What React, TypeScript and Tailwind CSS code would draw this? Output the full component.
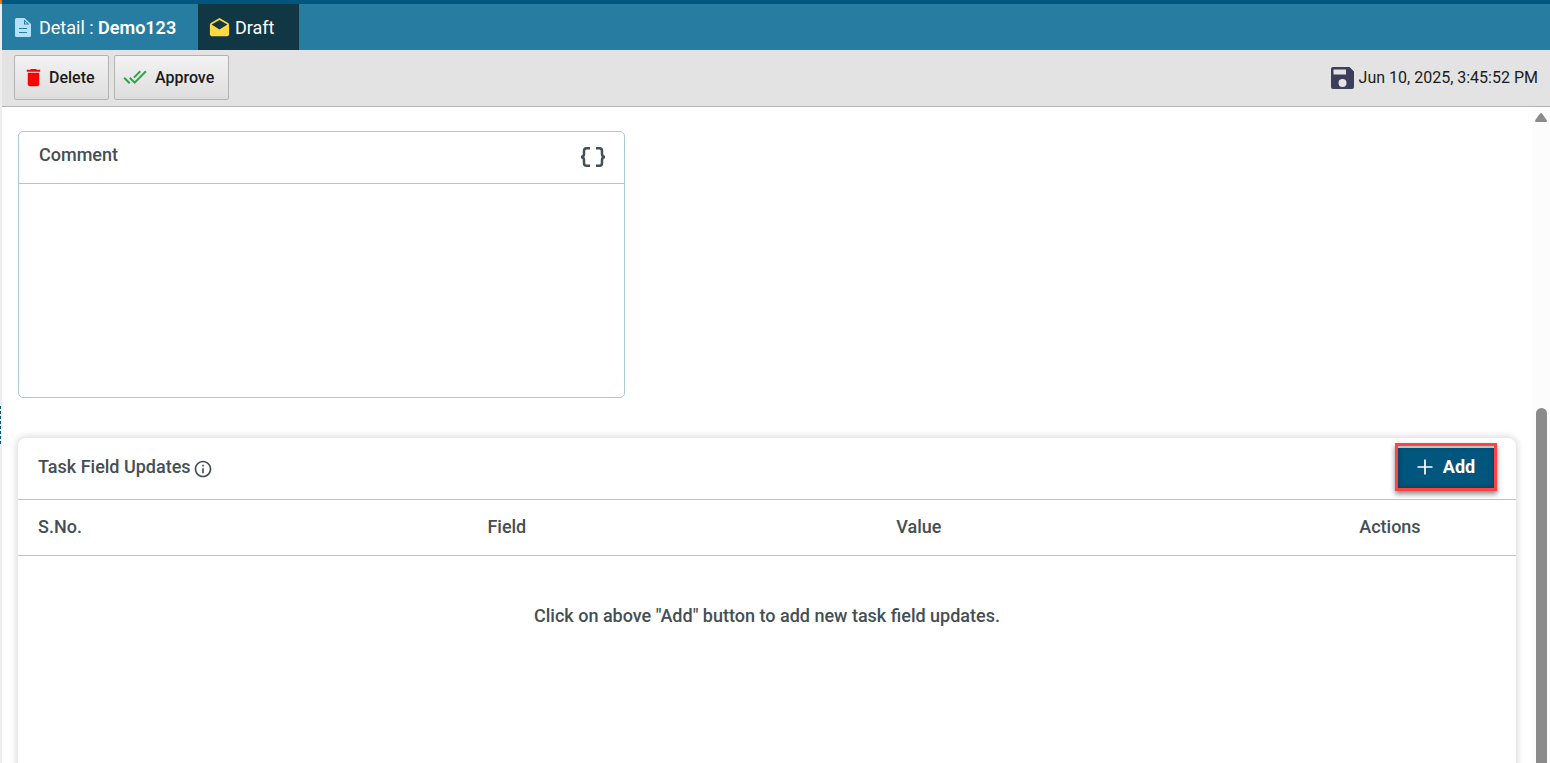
import { useState } from 'react';
import { MdDelete, MdDoneAll, MdDrafts, MdInfoOutline } from 'react-icons/md';

const DocumentIcon = () => (
  <svg className="h-[19px] w-4" viewBox="0 0 16 19" aria-hidden="true">
    <path fill="#b3e1ff" d="M1.500 0h8L16 6v11.500a1.500 1.500 0 0 1-1.500 1.500h-13A1.500 1.500 0 0 1 0 17.500v-16A1.500 1.500 0 0 1 1.500 0z" />
    <path fill="#277da1" d="M9 1.500V6.500h5.500zM4 10h8v1H4zM4 14h8v1H4z" />
    <path fill="#b3e1ff" d="M10 3.500v2h2.300z" />
  </svg>
);

const SaveIcon = () => (
  <svg className="h-[22px] w-[23px]" viewBox="0 0 23 22" aria-hidden="true">
    <path
      fill="#3d3d5c"
      fillRule="evenodd"
      d="M2 0h16.500L23 4.500V20a2 2 0 0 1-2 2H2a2 2 0 0 1-2-2V2a2 2 0 0 1 2-2zM2.500 2.500v5H15v-5zM11.500 12a4 4 0 1 0 0 8 4 4 0 0 0 0-8z"
    />
  </svg>
);

const BracesIcon = () => (
  <svg className="h-5 w-[26px]" viewBox="0 0 26 20" fill="none" stroke="#444f55" strokeWidth="2.500" aria-hidden="true">
    <path d="M10 1.250H6.500Q4 1.250 4 4v3Q4 10 1 10q3 0 3 3v3q0 2.750 2.500 2.750H10" />
    <path d="M16 1.250h3.500Q22 1.250 22 4v3q0 3 3 3-3 0-3 3v3q0 2.750-2.500 2.750H16" />
  </svg>
);

const PlusIcon = () => (
  <svg className="size-4" viewBox="0 0 16 16" stroke="currentColor" strokeWidth="1.700" aria-hidden="true">
    <path d="M8 .5v15M.5 8h15" />
  </svg>
);

const toolButton =
  'flex h-[45px] items-center border border-[#b3b3b3] rounded-xs bg-linear-to-b from-[#f3f3f3] to-[#dedddd] font-medium text-[#1a1a1a]';

const columns = [
  { title: 'S.No.', width: 'w-[30%]' },
  { title: 'Field', width: 'w-[27.3%]' },
  { title: 'Value', width: 'w-[30.9%]' },
  { title: 'Actions', width: '' },
];

const Header = () => (
  <header className="flex h-[50px] shrink-0 border-t-4 border-[#00567d] bg-[#277da1] text-lg text-white">
    <div className="flex w-[196px] items-center gap-2 pl-[13px]">
      <DocumentIcon />
      <span className="pt-0.5 whitespace-nowrap">
        Detail : <b className="font-semibold">Demo123</b>
      </span>
    </div>
    <div className="flex w-[101px] items-center gap-1 bg-[#123744] pt-0.5 pl-2.5">
      <MdDrafts className="size-[23px] text-[#ffd740]" />
      <span>Draft</span>
    </div>
  </header>
);

const Toolbar = () => (
  <div className="flex h-[57px] shrink-0 items-center justify-between border-b border-[#b3b3b3] bg-[#e3e3e3] px-3">
    <div className="flex gap-[5px] pb-0.5">
      <button type="button" className={`${toolButton} w-[95px] gap-1 pl-[7px]`}>
        <MdDelete className="size-[23px] text-[#ff0000]" />
        <span className="pt-0.5">Delete</span>
      </button>
      <button type="button" className={`${toolButton} w-[115px] gap-2 pl-2`}>
        <MdDoneAll className="size-6 text-[#28a745]" />
        <span className="pt-0.5">Approve</span>
      </button>
    </div>
    <div className="flex items-center gap-[5px] text-[#1a1a1a]">
      <SaveIcon />
      <time dateTime="2025-06-10T15:45:52">Jun 10, 2025, 3:45:52 PM</time>
    </div>
  </div>
);

const CommentBox = () => {
  const [comment, setComment] = useState('');

  return (
    <section className="flex h-[267px] w-[40.5%] flex-col rounded-[5px] border border-[#a9c9d6]">
      <div className="flex h-[52px] items-center justify-between border-b border-[#a9c9d6] pr-[18px] pb-0.5 pl-5">
        <label htmlFor="comment" className="pb-1">Comment</label>
        <button type="button" aria-label="Insert field">
          <BracesIcon />
        </button>
      </div>
      <textarea
        id="comment"
        className="w-full flex-1 resize-none px-5 py-3 outline-none"
        value={comment}
        onChange={(e) => setComment(e.target.value)}
      />
    </section>
  );
};

const TaskFieldUpdates = () => (
  <section className="mt-10 min-h-[400px] rounded-lg bg-white shadow-[0_0_6px_2px_#00000022]">
    <div className="flex h-[62px] items-center justify-between border-b border-[#a9c9d6] pr-[19px] pb-[3px] pl-5">
      <div className="flex items-center gap-0.5">
        <h2>Task Field Updates</h2>
        <MdInfoOutline className="mt-1 size-5" />
      </div>
      <button
        type="button"
        className="flex h-12 w-[102px] items-center justify-center gap-2.5 border-3 border-[#ff4343] bg-[#00567d] font-bold text-white shadow-[0_3px_5px_#00000077,inset_0_2px_0_#b9c4c4,inset_0_0_4px_1px_#00425f]"
      >
        <PlusIcon />
        Add
      </button>
    </div>
    <table className="w-full table-fixed text-left">
      <thead>
        <tr className="h-[55px] border-b border-[#a9c9d6]">
          {columns.map((column) => (
            <th key={column.title} scope="col" className={`${column.width} pl-5 font-medium`}>
              {column.title}
            </th>
          ))}
        </tr>
      </thead>
      <tbody>
        <tr>
          <td colSpan={4} className="pt-[46px] text-center">
            Click on above "Add" button to add new task field updates.
          </td>
        </tr>
      </tbody>
    </table>
  </section>
);

const App = () => (
  <div className="flex h-screen overflow-hidden bg-white font-[Roboto,sans-serif]">
    {/* Splitter */}
    <div className="flex w-0.5 shrink-0 flex-col bg-[#ededed]">
      <div className="h-1 bg-[#f97316]" />
      <div className="flex flex-1 flex-col justify-center pt-[83px]">
        <div className="h-[38px] w-px bg-[repeating-linear-gradient(#00567d_0_3px,#ededed_3px_5px)]" />
      </div>
    </div>

    <div className="flex min-w-0 flex-1 flex-col">
      <Header />
      <Toolbar />
      <div className="flex min-h-0 flex-1">
        <main className="min-w-0 flex-1 overflow-hidden pt-6 pr-4 pl-4 text-lg font-medium text-[#444f55]">
          <CommentBox />
          <TaskFieldUpdates />
        </main>
        {/* Scrollbar */}
        <div className="flex w-[18px] shrink-0 flex-col items-center bg-[#fcfcfc] pt-1.5">
          <svg className="h-[9px] w-3" viewBox="0 0 12 9" aria-hidden="true">
            <path fill="#8b8b8b" d="M5 .5q1-1 2 0l5 7q0 1.500-1 1.500H1Q0 9 0 7.500z" />
          </svg>
          <div className="mt-[286px] w-[11px] flex-1 rounded-t-full bg-[#8b8b8b]" />
        </div>
      </div>
    </div>
  </div>
);

export default App;
